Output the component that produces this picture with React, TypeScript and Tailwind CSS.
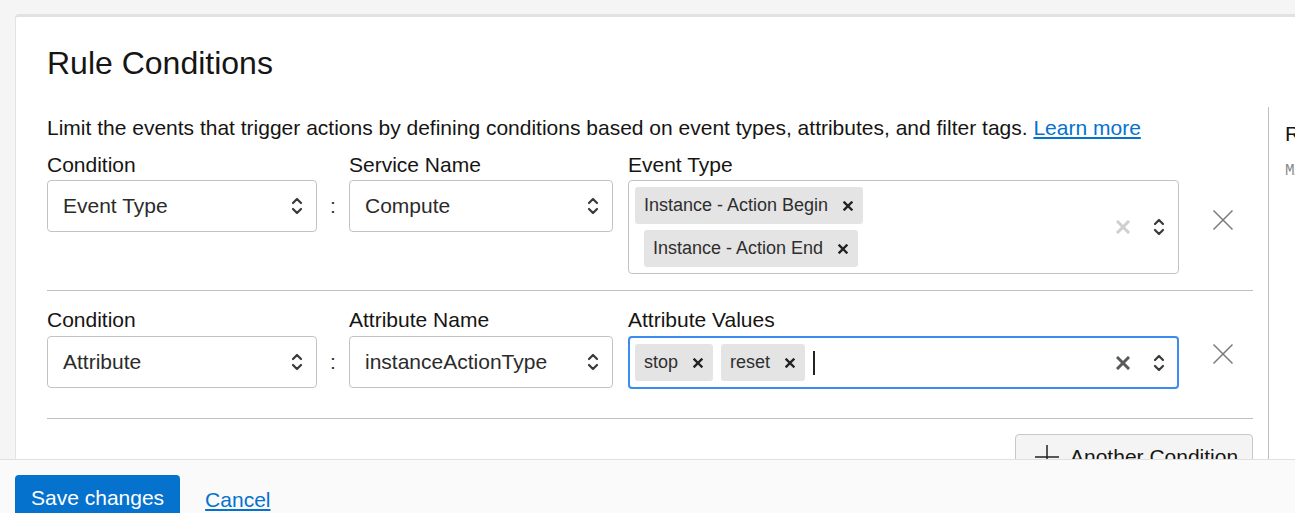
import React from "react";

const font = "font-['Liberation_Sans',Arial,sans-serif]";

function Chevrons() {
  return (
    <svg width="14" height="24" viewBox="0 0 14 24" fill="none" stroke="#3a3a3a" strokeWidth="2.2" strokeLinecap="round" strokeLinejoin="round">
      <path d="M3 9 L7 5 L11 9" />
      <path d="M3 15 L7 19 L11 15" />
    </svg>
  );
}

function ChipX() {
  return (
    <svg width="10" height="10" viewBox="0 0 10 10" stroke="#222" strokeWidth="2.4" strokeLinecap="square">
      <path d="M1.5 1.5 L8.5 8.5 M8.5 1.5 L1.5 8.5" />
    </svg>
  );
}

function ClearX({ color }: { color: string }) {
  return (
    <svg width="14" height="14" viewBox="0 0 14 14" stroke={color} strokeWidth="3" strokeLinecap="square">
      <path d="M2 2 L12 12 M12 2 L2 12" />
    </svg>
  );
}

function RemoveX() {
  return (
    <svg width="22" height="22" viewBox="0 0 22 22" stroke="#7a7a7a" strokeWidth="1.5">
      <path d="M1.5 1.5 L20.5 20.5 M20.5 1.5 L1.5 20.5" />
    </svg>
  );
}

function Select({ value, width }: { value: string; width: string }) {
  return (
    <div className={`${width} h-[52px] border border-[#c3c3c3] rounded-[4px] bg-white flex items-center pl-[15px] pr-[12px]`}>
      <span className="flex-1 text-[21px] text-[#2b2b2b]">{value}</span>
      <Chevrons />
    </div>
  );
}

function Chip({ label, className = "" }: { label: string; className?: string }) {
  return (
    <div className={`h-[37px] bg-[#e4e4e4] rounded-[3px] flex items-center pl-[9px] pr-[10px] gap-[15px] text-[18px] text-[#2e2e2e] ${className}`}>
      <span>{label}</span>
      <ChipX />
    </div>
  );
}

function Label({ children, mb = "mb-[4px]" }: { children: React.ReactNode; mb?: string }) {
  return <div className={`text-[21px] leading-[22px] text-[#161513] ${mb}`}>{children}</div>;
}

export default function App() {
  return (
    <div className={`${font} w-[1295px] h-[513px] flex flex-col bg-[#f5f5f5] overflow-hidden`}>
      <div className="flex-1 min-h-0 overflow-hidden pt-[14px] pl-[15px]">
        <div className="h-full bg-white border-t-[3px] border-t-[#e2e2e6] border-l border-l-[#e3e3e3] rounded-tl-[4px] flex flex-col">
          {/* Title */}
          <h2 className="pl-[31px] pt-[29px] text-[32px] leading-[35px] text-[#161513] mb-[26px]">Rule Conditions</h2>

          <div className="flex flex-1 min-h-0">
            {/* Conditions */}
            <div className="w-[1252px] shrink-0 pl-[31px] pr-[15px]">
              <p className="pt-[10px] text-[21px] leading-[22px] text-[#161513] whitespace-nowrap">
                Limit the events that trigger actions by defining conditions based on event types, attributes, and filter tags.{" "}
                <a href="#" className="text-[#0572ce] underline underline-offset-2">Learn more</a>
              </p>

              {/* Row 1 */}
              <div className="flex items-start mt-[15px]">
                <div>
                  <Label>Condition</Label>
                  <Select value="Event Type" width="w-[270px]" />
                </div>
                <div className="w-[32px] pt-[26px] h-[78px] flex items-center justify-center text-[21px] text-[#333]">:</div>
                <div>
                  <Label>Service Name</Label>
                  <Select value="Compute" width="w-[264px]" />
                </div>
                <div className="ml-[15px]">
                  <Label>Event Type</Label>
                  <div className="w-[551px] h-[94px] border border-[#c3c3c3] rounded-[4px] flex items-center pl-[6px] pr-[12px]">
                    <div className="flex-1">
                      <div className="w-[240px] flex flex-wrap gap-y-[6px]">
                        <Chip label="Instance - Action Begin" />
                        <Chip label="Instance - Action End" className="ml-[9px]" />
                      </div>
                    </div>
                    <div className="flex items-center gap-[22px]">
                      <ClearX color="#cfcfcf" />
                      <Chevrons />
                    </div>
                  </div>
                </div>
                <div className="ml-[33px] mt-[55px]">
                  <RemoveX />
                </div>
              </div>

              <div className="mt-[16px] border-t border-[#b8bfc7]" />

              {/* Row 2 */}
              <div className="flex items-start mt-[18px]">
                <div>
                  <Label mb="mb-[5px]">Condition</Label>
                  <Select value="Attribute" width="w-[270px]" />
                </div>
                <div className="w-[32px] pt-[27px] h-[79px] flex items-center justify-center text-[21px] text-[#333]">:</div>
                <div>
                  <Label mb="mb-[5px]">Attribute Name</Label>
                  <Select value="instanceActionType" width="w-[264px]" />
                </div>
                <div className="ml-[15px]">
                  <Label mb="mb-[5px]">Attribute Values</Label>
                  <div className="w-[551px] h-[53px] border-2 border-[#3a8cf0] rounded-[4px] flex items-center pl-[5px] pr-[11px]">
                    <div className="flex-1 flex items-center gap-[8px]">
                      <Chip label="stop" />
                      <Chip label="reset" />
                      <span className="w-[1.5px] h-[24px] bg-[#222]" />
                    </div>
                    <div className="flex items-center gap-[22px]">
                      <ClearX color="#5a5a5a" />
                      <Chevrons />
                    </div>
                  </div>
                </div>
                <div className="ml-[33px] mt-[34px]">
                  <RemoveX />
                </div>
              </div>

              <div className="mt-[29px] border-t border-[#b8bfc7]" />

              <div className="flex justify-end mt-[15px]">
                <button className="h-[46px] w-[238px] bg-[#f4f4f4] border border-[#c8c8c8] rounded-[4px] flex items-center pl-[18px] gap-[10px] text-[21px] text-[#161513] whitespace-nowrap">
                  <svg width="26" height="26" viewBox="0 0 26 26" stroke="#222" strokeWidth="1.5">
                    <path d="M13 1 V25 M1 13 H25" />
                  </svg>
                  Another Condition
                </button>
              </div>
            </div>

            {/* Side panel */}
            <div className="flex-1 min-w-0 overflow-hidden border-l border-[#b8bfc7] pl-[16px] pt-[16px] whitespace-nowrap">
              <div className="text-[21px] leading-[22px] text-[#161513]">Rule Logic</div>
              <div className="mt-[14px] font-['Liberation_Mono',monospace] text-[16px] text-[#8a8a8a]">MATCH event WHERE</div>
            </div>
          </div>
        </div>
      </div>

      {/* Footer */}
      <div className="h-[54px] shrink-0 border-t border-[#e0e0e0] bg-[#fafafa] flex items-start pt-[15px] pl-[15px] gap-[25px]">
        <button className="h-[46px] px-[16px] bg-[#0572ce] text-white text-[21px] rounded-[4px]">Save changes</button>
        <a href="#" className="mt-[9px] text-[21px] text-[#0572ce] underline underline-offset-2">Cancel</a>
      </div>
    </div>
  );
}
